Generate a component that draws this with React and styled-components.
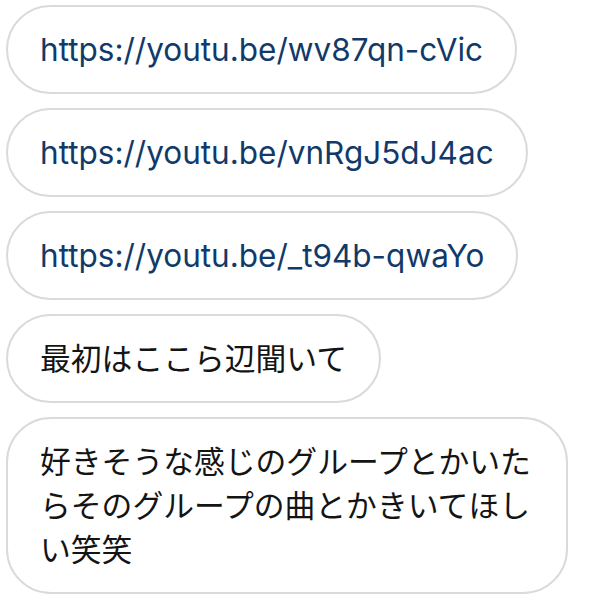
import styled, { createGlobalStyle } from "styled-components"

const GlobalStyle = createGlobalStyle`
body{
    margin:0;
    background:#ffffff;
    font-family:Inter,"Noto Sans CJK JP","Noto Sans",sans-serif;
}
`

const Thread = styled.div`
display:flex;
flex-direction:column;
align-items:flex-start;
gap:14px;
padding:5px 6px;
`

const Bubble = styled.div`
box-sizing:border-box;
max-width:562px;
padding:21px 32px 20px 32px;
border:2px solid #dadada;
border-radius:45px;
background:#fff;
font-size:${props => props.$link ? "31.5px" : "30.8px"};
line-height:44px;
color:${props => props.$link ? "#113a6a" : "#141414"};
word-break:break-all;
`

const messages = [
    { text: "https://youtu.be/wv87qn-cVic", link: true },
    { text: "https://youtu.be/vnRgJ5dJ4ac", link: true },
    { text: "https://youtu.be/_t94b-qwaYo", link: true },
    { text: "最初はここら辺聞いて" },
    { text: "好きそうな感じのグループとかいたらそのグループの曲とかきいてほしい笑笑" },
]

export default function App() {
    return (
        <>
            <GlobalStyle />
            <Thread>
                {messages.map((m, i) => (
                    <Bubble key={i} $link={m.link}>{m.text}</Bubble>
                ))}
            </Thread>
        </>
    )
}
